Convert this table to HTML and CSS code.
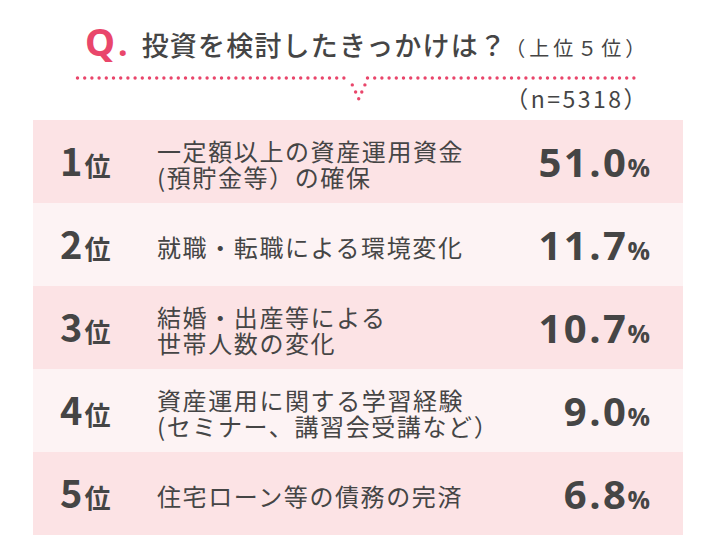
FILE: index.html
```html
<!DOCTYPE html>
<html lang="ja">
<head>
<meta charset="utf-8">
<title>投資を検討したきっかけは？</title>
<link rel="stylesheet" href="styles.css">
</head>
<body>
<div class="page">
  <header class="head">
    <div class="q-title">
      <span class="q">Q<span class="q-dot">.</span></span>
      <h1 class="title">投資を検討したきっかけは？</h1>
      <span class="sub">（上位５位）</span>
    </div>
    <div class="rule">
      <svg class="dots" width="714" height="8" viewBox="0 74 714 8" aria-hidden="true">
        <g fill="#e9466b">
          <circle cx="352.3" cy="84.9" r="1.7"/>
          <circle cx="355.6" cy="92" r="1.7"/>
          <circle cx="358.7" cy="98.8" r="1.7"/>
          <circle cx="361.8" cy="92" r="1.7"/>
          <circle cx="364.9" cy="84.9" r="1.7"/>
        </g>
        <g stroke="#e9466b" stroke-width="3.4" stroke-linecap="round" stroke-dasharray="0 7.2">
          <line x1="77.5" y1="78" x2="350" y2="78"/>
          <line x1="367.5" y1="78" x2="640" y2="78"/>
        </g>
      </svg>
    </div>
    <p class="count">（n=5318）</p>
  </header>

  <ol class="ranking">
    <li class="row dark">
      <div class="rank"><span class="num">1</span><span class="i">位</span></div>
      <div class="label">一定額以上の資産運用資金<br>(預貯金等）の確保</div>
      <div class="pct">51.0<span class="pc">%</span></div>
    </li>
    <li class="row light">
      <div class="rank"><span class="num">2</span><span class="i">位</span></div>
      <div class="label">就職・転職による環境変化</div>
      <div class="pct">11.7<span class="pc">%</span></div>
    </li>
    <li class="row dark">
      <div class="rank"><span class="num">3</span><span class="i">位</span></div>
      <div class="label">結婚・出産等による<br>世帯人数の変化</div>
      <div class="pct">10.7<span class="pc">%</span></div>
    </li>
    <li class="row light">
      <div class="rank"><span class="num">4</span><span class="i">位</span></div>
      <div class="label">資産運用に関する学習経験<br>(セミナー、講習会受講など）</div>
      <div class="pct">9.0<span class="pc">%</span></div>
    </li>
    <li class="row dark">
      <div class="rank"><span class="num">5</span><span class="i">位</span></div>
      <div class="label">住宅ローン等の債務の完済</div>
      <div class="pct">6.8<span class="pc">%</span></div>
    </li>
  </ol>
</div>
</body>
</html>
```

FILE: styles.css
```css
* { box-sizing: border-box; }

html, body {
  margin: 0;
  padding: 0;
  background: #ffffff;
}

body {
  font-family: "Noto Sans CJK JP", "Noto Sans", sans-serif;
  color: #454545;
}

.page {
  width: 714px;
  height: 560px;
  padding: 20px 31px 0 33px;
}

.head {
  display: flex;
  flex-direction: column;
}

.q-title {
  display: flex;
  align-items: baseline;
  padding-left: 52px;
  height: 42px;
}

.q {
  font-family: "Noto Sans", "Open Sans", sans-serif;
  font-weight: 700;
  font-size: 38px;
  line-height: 42px;
  color: #e9466b;
}

.q-dot {
  font-size: 34px;
  margin-left: 3px;
}

.title {
  margin: 0 0 0 14px;
  font-size: 27px;
  font-weight: 500;
  line-height: 42px;
  letter-spacing: 1.2px;
  color: #454545;
}

.sub {
  font-size: 20px;
  line-height: 42px;
  letter-spacing: 4px;
  margin-left: -2px;
  color: #454545;
}

.rule {
  height: 8px;
  margin: 12px 0 0 -33px;
}

.dots {
  display: block;
  overflow: visible;
}

.count {
  margin: 3px 0 0 0;
  align-self: flex-end;
  padding-right: 34px;
  font-size: 23px;
  line-height: 26px;
  letter-spacing: 2.5px;
}

.ranking {
  list-style: none;
  margin: 9px 0 0 0;
  padding: 0;
  width: 650px;
}

.row {
  display: grid;
  grid-template-columns: 97px 1fr auto;
  align-items: center;
  height: 83px;
  padding: 0 33px 0 27px;
}

.dark { background: #fce3e5; }
.light { background: #fdf3f4; }

.rank {
  display: flex;
  align-items: baseline;
  font-weight: 700;
}

.num {
  font-size: 38px;
  line-height: 1;
}

.i {
  font-size: 26px;
  margin-left: 2px;
}

.label {
  font-size: 24px;
  line-height: 26px;
  letter-spacing: 1.6px;
  margin-top: 4px;
}

.pct {
  font-family: "Open Sans", "Noto Sans", sans-serif;
  font-weight: 700;
  font-size: 40px;
  line-height: 1;
  letter-spacing: 2.5px;
  text-align: right;
}

.pc {
  font-size: 25px;
  letter-spacing: 0;
  margin-left: -1px;
}
```
